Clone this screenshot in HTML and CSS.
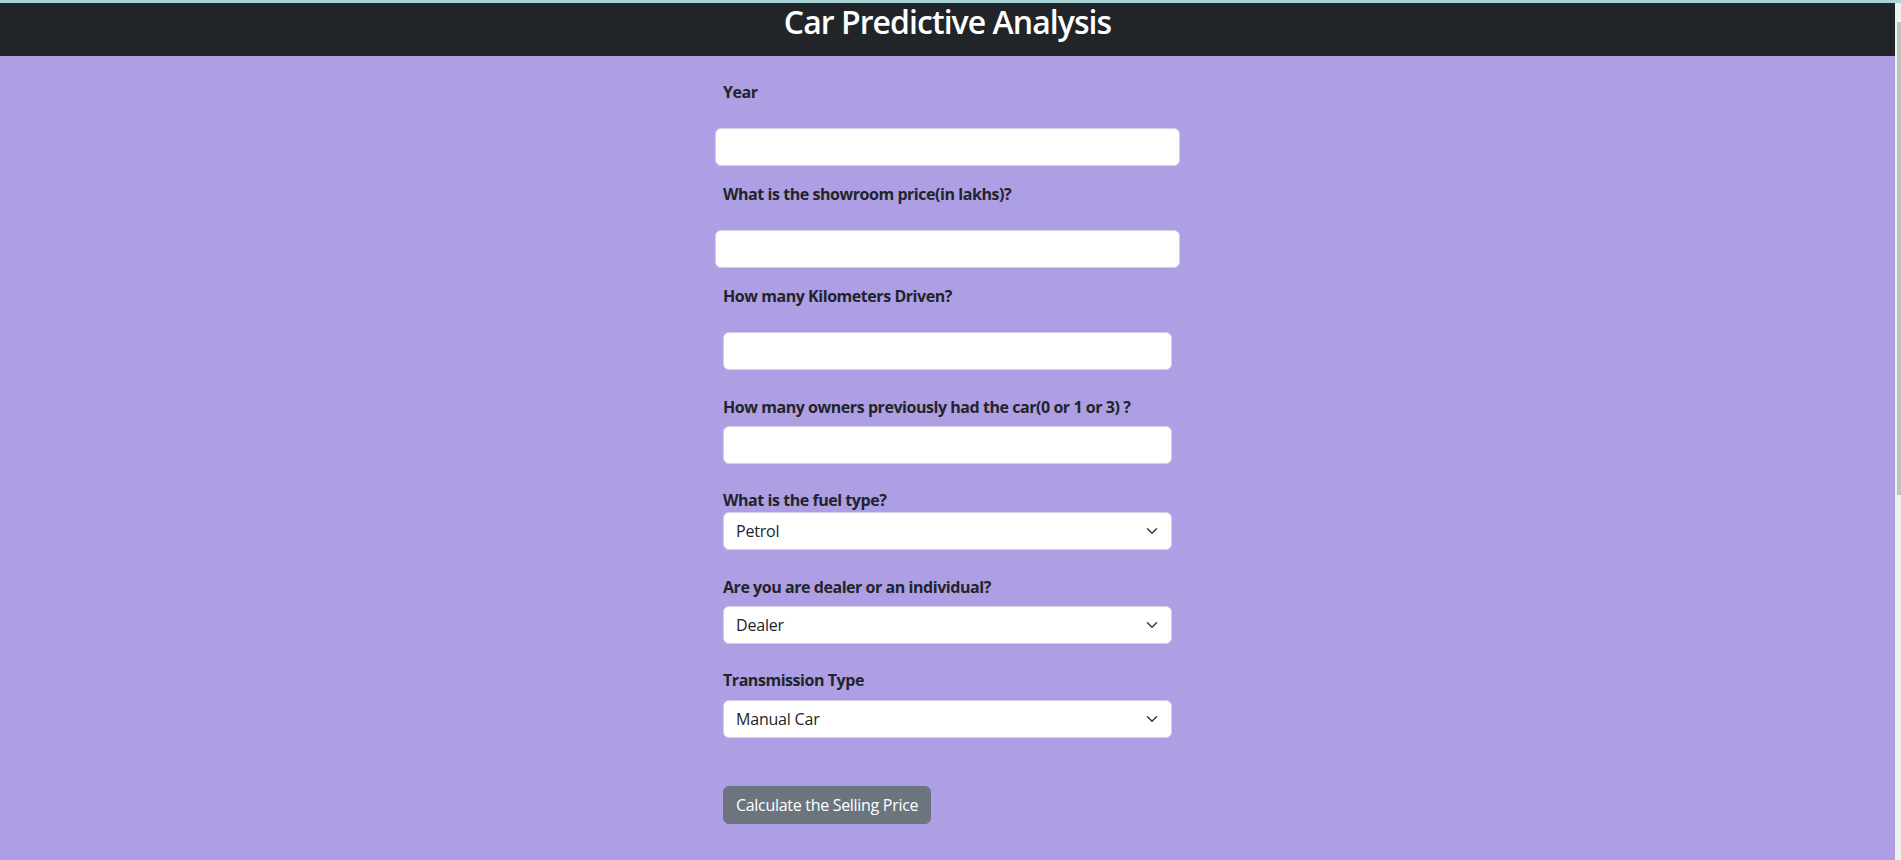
FILE: index.html
```html
<!DOCTYPE html>
<html lang="en">
<head>
<meta charset="utf-8">
<title>Car Predictive Analysis</title>
<link rel="stylesheet" href="styles.css">
</head>
<body>
<div class="strip"></div>
<div class="frame">
  <div class="page">
    <header class="topbar">
      <h2 class="title">Car Predictive Analysis</h2>
    </header>
    <main class="content">
      <form class="form">
        <div class="group">
          <label class="label label-gap" for="year">Year</label>
          <input class="control control-wide" id="year" type="text">
        </div>
        <div class="group group-16">
          <label class="label label-gap" for="price">What is the showroom price(in lakhs)?</label>
          <input class="control control-wide" id="price" type="text">
        </div>
        <div class="group group-16">
          <label class="label label-gap" for="kms">How many Kilometers Driven?</label>
          <input class="control" id="kms" type="text">
        </div>
        <div class="group group-25">
          <label class="label label-7" for="owners">How many owners previously had the car(0 or 1 or 3) ?</label>
          <input class="control" id="owners" type="text">
        </div>
        <div class="group group-24">
          <label class="label" for="fuel">What is the fuel type?</label>
          <div class="select-wrap">
            <select class="control select" id="fuel">
              <option>Petrol</option>
              <option>Diesel</option>
              <option>CNG</option>
            </select>
            <svg class="chevron" viewBox="0 0 16 16" width="16" height="12" aria-hidden="true"><path d="M2 5l6 6 6-6" fill="none" stroke="#343a40" stroke-width="2" stroke-linecap="round" stroke-linejoin="round"/></svg>
          </div>
        </div>
        <div class="group group-25">
          <label class="label label-7" for="seller">Are you are dealer or an individual?</label>
          <div class="select-wrap">
            <select class="control select" id="seller">
              <option>Dealer</option>
              <option>Individual</option>
            </select>
            <svg class="chevron" viewBox="0 0 16 16" width="16" height="12" aria-hidden="true"><path d="M2 5l6 6 6-6" fill="none" stroke="#343a40" stroke-width="2" stroke-linecap="round" stroke-linejoin="round"/></svg>
          </div>
        </div>
        <div class="group group-24">
          <label class="label label-8" for="trans">Transmission Type</label>
          <div class="select-wrap">
            <select class="control select" id="trans">
              <option>Manual Car</option>
              <option>Automatic Car</option>
            </select>
            <svg class="chevron" viewBox="0 0 16 16" width="16" height="12" aria-hidden="true"><path d="M2 5l6 6 6-6" fill="none" stroke="#343a40" stroke-width="2" stroke-linecap="round" stroke-linejoin="round"/></svg>
          </div>
        </div>
        <div class="actions">
          <button class="btn" type="button">Calculate the Selling Price</button>
        </div>
      </form>
    </main>
  </div>
  <div class="rail"><div class="thumb"></div></div>
</div>
</body>
</html>
```

FILE: styles.css
```css
* {
  box-sizing: border-box;
}

html,
body {
  height: 860px;
  overflow: hidden;
}

body {
  margin: 0;
  font-family: "Segoe UI", "Open Sans", "Noto Sans", "Liberation Sans", sans-serif;
  font-size: 16px;
  line-height: 24px;
  color: #212529;
  background: #ae9ee4;
  display: flex;
  flex-direction: column;
}

.strip {
  height: 3px;
  background: #a8d5d8;
  flex: none;
}

.frame {
  flex: 1;
  display: flex;
  min-height: 0;
}

.page {
  flex: 1;
  display: flex;
  flex-direction: column;
  background: #ae9ee4;
}

.rail {
  width: 6px;
  flex: none;
  background: #f0f0f0;
  padding: 19px 0 0 2px;
}

.thumb {
  height: 473px;
  background: #c1c1c1;
}

.topbar {
  height: 53px;
  flex: none;
  background: #212529;
  display: flex;
  justify-content: center;
}

.title {
  margin: 0;
  padding-top: 1px;
  font-size: 32px;
  line-height: 36px;
  font-weight: 600;
  color: #ffffff;
  letter-spacing: -0.95px;
}

.content {
  flex: 1;
  padding-top: 24px;
}

.form {
  width: 449px;
  margin: 0 auto;
  display: flex;
  flex-direction: column;
}

.group {
  display: flex;
  flex-direction: column;
}

.group-16 { margin-top: 16px; }
.group-24 { margin-top: 24px; }
.group-25 { margin-top: 25px; }

.label {
  display: block;
  font-weight: 700;
  line-height: 24px;
  letter-spacing: -0.45px;
}

.label-gap { margin-bottom: 24px; }
.label-7 { margin-bottom: 7px; }
.label-8 { margin-bottom: 8px; }

.control {
  display: block;
  width: 100%;
  height: 38px;
  padding: 6px 12px;
  font-family: inherit;
  font-size: 16px;
  line-height: 24px;
  color: #212529;
  background: #ffffff;
  border: 1px solid #d3d0e4;
  border-radius: 6px;
  outline: none;
}

.control-wide {
  width: auto;
  margin: 0 -8px;
}

.select-wrap {
  position: relative;
}

.select {
  appearance: none;
  -webkit-appearance: none;
  padding-right: 36px;
  letter-spacing: -0.2px;
}

.chevron {
  position: absolute;
  right: 12px;
  top: 13px;
  pointer-events: none;
}

.actions {
  margin-top: 48px;
  display: flex;
}

.btn {
  height: 38px;
  padding: 6px 12px;
  font-family: inherit;
  font-size: 16px;
  line-height: 24px;
  color: #ffffff;
  background: #6c757d;
  border: 1px solid #6c757d;
  border-radius: 6px;
  letter-spacing: -0.3px;
}
```
